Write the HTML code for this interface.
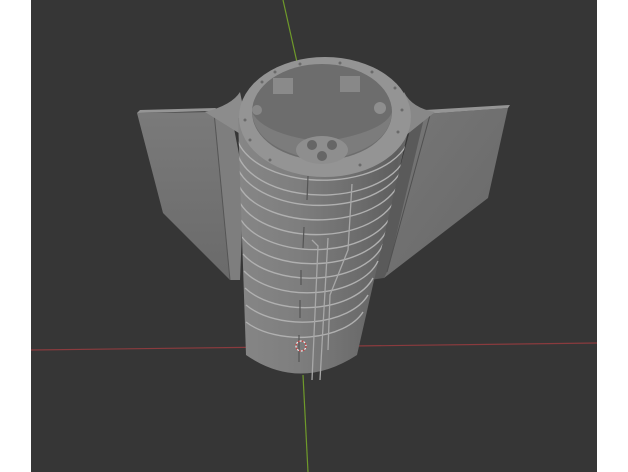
<!DOCTYPE html>
<html><head><style>
html,body{margin:0;padding:0;background:#fff;}
svg{display:block}
</style></head><body>
<svg width="628" height="472" viewBox="0 0 628 472" xmlns="http://www.w3.org/2000/svg">
<defs>
<linearGradient id="cyl" x1="0" y1="0" x2="1" y2="0">
<stop offset="0" stop-color="#868686"/>
<stop offset="0.35" stop-color="#7e7e7e"/>
<stop offset="0.7" stop-color="#6c6c6c"/>
<stop offset="0.92" stop-color="#5e5e5e"/>
<stop offset="1" stop-color="#6e6e6e"/>
</linearGradient>
<linearGradient id="lfin" x1="0" y1="0" x2="0" y2="1">
<stop offset="0" stop-color="#7a7a7a"/>
<stop offset="1" stop-color="#6a6a6a"/>
</linearGradient>
<linearGradient id="rfin" x1="0" y1="0" x2="1" y2="1">
<stop offset="0" stop-color="#777"/>
<stop offset="1" stop-color="#686868"/>
</linearGradient>
<clipPath id="cc"><path d="M238 120 L246 355 Q300 392 357 355 L411 120 Z"/></clipPath>
</defs>
<rect width="628" height="472" fill="#fff"/>
<rect x="31" y="0" width="566" height="472" fill="#363636"/>
<line x1="31" y1="350" x2="597" y2="343" stroke="#8a3b3e" stroke-width="1.2"/>
<line x1="283" y1="0" x2="301" y2="80" stroke="#6f9a2a" stroke-width="1.2"/>
<line x1="303" y1="375" x2="308" y2="472" stroke="#6f9a2a" stroke-width="1.2"/>
<polygon points="137,113 214,112 230,280 163,213" fill="url(#lfin)"/>
<polygon points="137,113 214,111 216,108 140,110" fill="#959595"/>
<polygon points="214,112 232,118 244,180 240,280 230,280" fill="#7e7e7e"/>
<line x1="214" y1="112" x2="230" y2="280" stroke="#555" stroke-width="1"/>
<polygon points="425,114 508,108 488,198 384,278 386,200" fill="url(#rfin)"/>
<polygon points="425,114 508,108 510,105 425,110" fill="#959595"/>
<polygon points="410,130 425,114 388,270 384,278 370,280" fill="#5a5a5a"/>
<line x1="430" y1="115" x2="387" y2="272" stroke="#505050" stroke-width="1"/>
<path d="M205 112 Q232 105 240 92 L250 140 Z" fill="#8c8c8c"/>
<path d="M435 112 Q412 108 404 92 L400 140 Z" fill="#888"/>
<path d="M238 118 L246 355 Q300 392 357 355 L411 118 Z" fill="url(#cyl)"/>
<g clip-path="url(#cc)" fill="none" stroke="#b0b0b0" stroke-width="1.4">
<path d="M236 135 A87 50 0 0 0 410 125"/>
<path d="M237 152 A86 50 0 0 0 408 142"/>
<path d="M238 169 A85 49 0 0 0 405 159"/>
<path d="M239 186 A83 48 0 0 0 401 176"/>
<path d="M240 203 A81 47 0 0 0 397 193"/>
<path d="M241 220 A79 46 0 0 0 393 210"/>
<path d="M242 237 A77 45 0 0 0 388 227"/>
<path d="M243 254 A75 44 0 0 0 383 244"/>
<path d="M244 271 A73 43 0 0 0 378 261"/>
<path d="M245 288 A71 42 0 0 0 373 278"/>
<path d="M246 305 A69 40 0 0 0 368 295"/>
<path d="M246 322 A67 38 0 0 0 363 312"/>
</g>
<g stroke="#555" stroke-width="1.2" fill="none">
<line x1="308" y1="176" x2="307" y2="200"/>
<line x1="304" y1="227" x2="303" y2="248"/>
<line x1="301" y1="270" x2="301" y2="285"/>
<line x1="300" y1="300" x2="300" y2="318"/>
<line x1="299" y1="335" x2="299" y2="362"/>
</g>
<g stroke="#a8a8a8" stroke-width="1.3" fill="none">
<path d="M352 184 L348 250 L330 295 L328 350"/>
<path d="M312 240 L318 246 L312 380"/>
<path d="M328 238 L320 380"/>
</g>
<ellipse cx="325" cy="117" rx="86" ry="60" fill="#949494"/>
<ellipse cx="322" cy="112" rx="70" ry="48" fill="#6d6d6d"/>
<path d="M252 112 Q255 150 322 161 Q390 150 392 112 Q385 132 322 142 Q262 134 252 112Z" fill="#7c7c7c"/>
<ellipse cx="322" cy="150" rx="26" ry="14" fill="#8e8e8e"/>
<circle cx="312" cy="145" r="5" fill="#666"/>
<circle cx="332" cy="145" r="5" fill="#666"/>
<circle cx="322" cy="156" r="5" fill="#666"/>
<rect x="273" y="78" width="20" height="16" fill="#8a8a8a"/>
<rect x="340" y="76" width="20" height="16" fill="#888"/>
<circle cx="380" cy="108" r="6" fill="#8e8e8e"/>
<circle cx="257" cy="110" r="5" fill="#888"/>
<g fill="#6a6a6a">
<circle cx="262" cy="82" r="1.5"/><circle cx="275" cy="72" r="1.5"/><circle cx="300" cy="64" r="1.5"/>
<circle cx="340" cy="63" r="1.5"/><circle cx="372" cy="72" r="1.5"/><circle cx="395" cy="88" r="1.5"/>
<circle cx="402" cy="110" r="1.5"/><circle cx="398" cy="132" r="1.5"/><circle cx="245" cy="120" r="1.5"/>
<circle cx="250" cy="140" r="1.5"/><circle cx="270" cy="160" r="1.5"/><circle cx="360" cy="165" r="1.5"/>
</g>
<circle cx="301" cy="346" r="5" fill="none" stroke="#c84040" stroke-width="1.2" stroke-dasharray="2 2"/>
<circle cx="301" cy="346" r="5" fill="none" stroke="#eee" stroke-width="1.2" stroke-dasharray="2 2" stroke-dashoffset="2"/>
</svg>
</body></html>
